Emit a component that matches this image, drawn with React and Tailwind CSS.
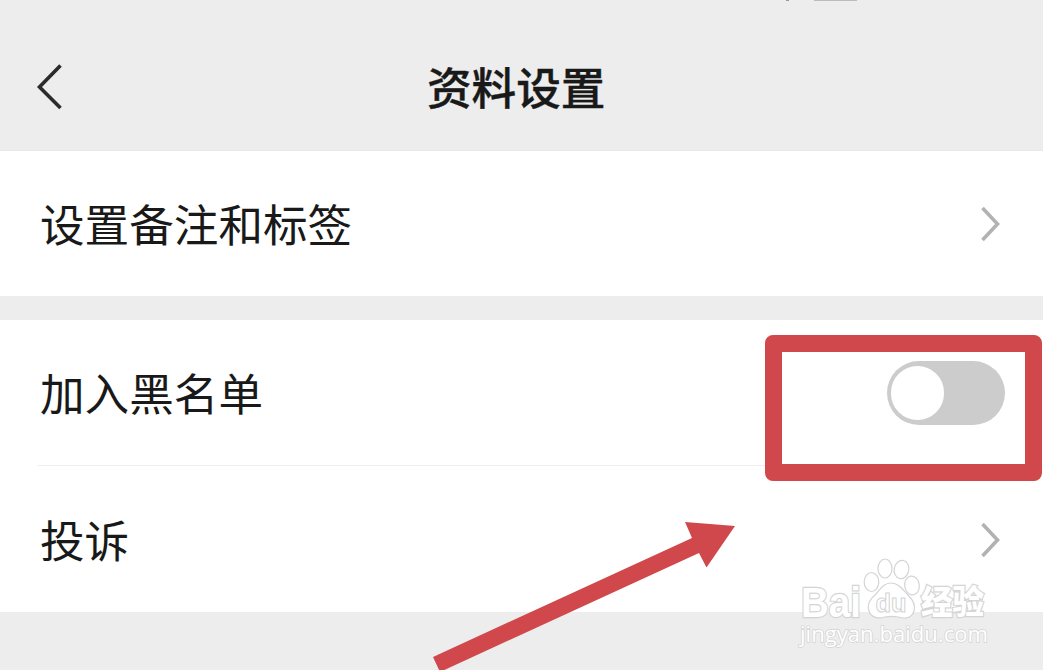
import React, { useState } from "react";

const BackIcon = () => (
  <svg width="26" height="46" viewBox="0 0 26 46" fill="none" stroke="#2b2b2b" strokeWidth="3.6">
    <path d="M24.5 1.5 L3.5 23 L24.5 44" />
  </svg>
);

const ArrowIcon = () => (
  <svg width="20" height="36" viewBox="0 0 20 36" fill="none" stroke="#b2b2b2" strokeWidth="3.6">
    <path d="M1.5 2 L16.5 18 L1.5 34" />
  </svg>
);

const Toggle = ({ checked, onChange }) => (
  <button
    type="button"
    role="switch"
    aria-checked={checked}
    onClick={() => onChange(!checked)}
    className={`flex h-16 w-[118px] items-center rounded-full px-[4px] ${checked ? "justify-end bg-[#07c160]" : "bg-[#cccccc]"}`}
  >
    <span className="h-[54px] w-[53px] rounded-full bg-white" />
  </button>
);

const Row = ({ label, children, className = "" }) => (
  <div className={`flex items-center justify-between pl-[40px] ${className}`}>
    <span className="mb-[2px] text-[44.6px] leading-[64px] text-[#191919]">{label}</span>
    {children}
  </div>
);

const Watermark = () => (
  <svg width="200" height="100" viewBox="0 0 200 100" className="absolute left-[795px] top-[552px]" fill="#ffffff" stroke="#d4d4d4" strokeWidth="1.2">
    <text x="6" y="65" fontSize="42" fontWeight="700" fontFamily="'Liberation Sans', sans-serif" strokeWidth="2.4" paintOrder="stroke" textLength="60" lengthAdjust="spacingAndGlyphs">Bai</text>
    <text x="126" y="62" fontSize="33" fontWeight="900" fontFamily="'Noto Sans CJK SC', sans-serif" strokeWidth="2.4" paintOrder="stroke" textLength="63" lengthAdjust="spacingAndGlyphs">经验</text>
    <ellipse cx="76.5" cy="30" rx="7.3" ry="9.5" />
    <ellipse cx="90" cy="16.5" rx="7" ry="9.5" />
    <ellipse cx="106.5" cy="17.5" rx="7.3" ry="9.2" transform="rotate(12 106.5 17.5)" />
    <ellipse cx="117" cy="33.5" rx="7.3" ry="9.5" transform="rotate(-8 117 33.5)" />
    <path d="M96 31 C88 31 85 38 80 43 C75 47 72 53 74 59 C76 66 84 67 90 65 C95 64 98 64 103 65 C110 67 117 66 119 59 C121 53 118 48 113 43 C108 38 104 31 96 31 Z" />
    <text x="80.5" y="60" fontSize="25" fontWeight="700" fontFamily="'Liberation Sans', sans-serif" strokeWidth="1" textLength="31" lengthAdjust="spacingAndGlyphs">du</text>
    <text x="5" y="90" fontSize="21" fontFamily="'Open Sans', sans-serif" strokeWidth="1.5" paintOrder="stroke" textLength="188" lengthAdjust="spacingAndGlyphs">jingyan.baidu.com</text>
  </svg>
);

const App = () => {
  const [blocked, setBlocked] = useState(false);

  return (
    <div className="relative h-[670px] w-[1043px] overflow-hidden bg-[#ededed] font-['Noto_Sans_CJK_SC',sans-serif]">
      {/* Bottom edge of the status bar icons */}
      <div className="flex h-px gap-[25px] pl-[786px]">
        <span className="w-[3px] bg-[#999999]" />
        <span className="w-[43px] bg-[#bbbbbb]" />
      </div>

      <header className="flex h-[150px] items-center border-b border-[#e8e8e8] pl-[36px] pb-[1px]">
        <button type="button" className="mt-[23px] w-[26px]">
          <BackIcon />
        </button>
        <h1 className="ml-[365px] mt-[21px] text-[44.6px] font-medium leading-[64px] text-[#191919] [-webkit-text-stroke:0.4px_#191919]">资料设置</h1>
      </header>

      <section className="bg-white">
        <Row label="设置备注和标签" className="h-[145px] pr-[42px]">
          <ArrowIcon />
        </Row>
      </section>

      <section className="mt-6 bg-white">
        <Row label="加入黑名单" className="h-[145px] pr-[38px]">
          <Toggle checked={blocked} onChange={setBlocked} />
        </Row>
        <div className="ml-[38px] h-px bg-[#eeeeee]" />
        <Row label="投诉" className="h-[146px] pr-[42px] pt-[2px]">
          <ArrowIcon />
        </Row>
      </section>

      {/* Highlight and pointer */}
      <div className="pointer-events-none absolute left-[765px] top-[335px] h-[146px] w-[277px] rounded-[8px] border-[17px] border-[#d0484b]" />
      <svg width="320" height="160" viewBox="430 515 320 160" className="pointer-events-none absolute left-[430px] top-[515px]" fill="#d0484b">
        <path d="M735 526 L685 522 L692 538 L433 657 L440 672 L699 553 L706.5 567.5 Z" />
      </svg>
      <Watermark />
    </div>
  );
};

export default App;
